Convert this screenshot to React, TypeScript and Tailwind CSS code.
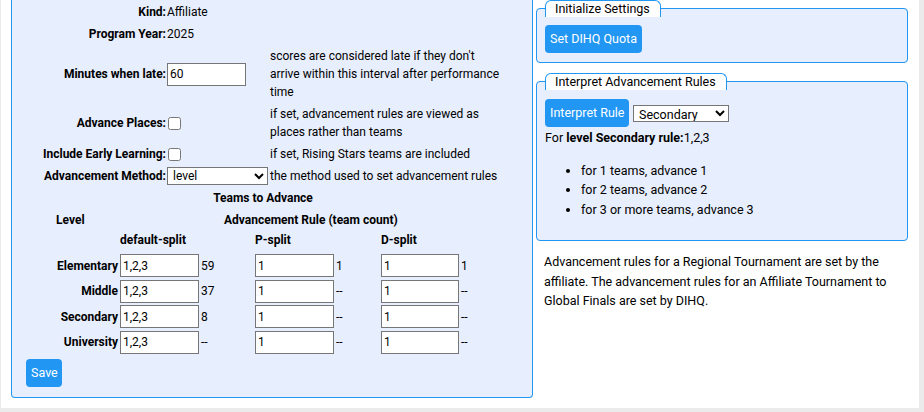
import React from "react";

const inputCls =
  "h-[23px] border border-[#767676] bg-white px-[2px] text-[12px] leading-[18px] text-black outline-none";
const btnCls =
  "h-[28px] whitespace-nowrap rounded-[4px] bg-[#2196f3] px-[5px] leading-[16px] text-white";

function Row({
  label,
  children,
  desc,
}: {
  label: string;
  children?: React.ReactNode;
  desc?: React.ReactNode;
}) {
  return (
    <div className="flex items-center py-[2px]">
      <div className="w-[155px] pr-[1px] text-right font-bold leading-[18px]">{label}</div>
      <div className="flex w-[103px] items-center leading-[18px]">{children}</div>
      <div className="w-[236px] leading-[18px]">{desc}</div>
    </div>
  );
}

function LevelRow({ name, a, c1, c2, c3 }: { name: string; a: string; c1: string; c2: string; c3: string }) {
  return (
    <div className="flex h-[25.5px] items-center">
      <div className="w-[106px] text-right font-bold">{name}</div>
      <input className={`${inputCls} ml-[2px] w-[79px]`} defaultValue={a} />
      <span className="ml-[2px] w-[54px]">{c1}</span>
      <input className={`${inputCls} w-[79px]`} defaultValue="1" />
      <span className="ml-[2px] w-[45px]">{c2}</span>
      <input className={`${inputCls} w-[78px]`} defaultValue="1" />
      <span className="ml-[2px]">{c3}</span>
    </div>
  );
}

export default function App() {
  return (
    <div className="h-[412px] w-[924px] overflow-hidden bg-[#ebebeb] font-['Roboto',sans-serif] text-black">
      <div className="ml-[1px] flex h-[408px] w-[918px] items-start bg-white pl-[10px]">
        {/* Left panel */}
        <div className="w-[522px] rounded-b-[4px] border border-t-0 border-[#2196f3] bg-[#e7eefd] pt-[1px] pb-[10px] text-[12px]">
          <Row label="Kind:">Affiliate</Row>
          <Row label="Program Year:">2025</Row>
          <Row
            label="Minutes when late:"
            desc="scores are considered late if they don't arrive within this interval after performance time"
          >
            <input className={`${inputCls} h-[22px] w-[79px]`} defaultValue="60" />
          </Row>
          <Row label="Advance Places:" desc="if set, advancement rules are viewed as places rather than teams">
            <input type="checkbox" className="m-0 ml-[1px]" />
          </Row>
          <Row label="Include Early Learning:" desc="if set, Rising Stars teams are included">
            <input type="checkbox" className="m-0 ml-[1px]" />
          </Row>
          <Row label="Advancement Method:" desc="the method used to set advancement rules">
            <select
              className="h-[18px] w-[101px] border border-[#767676] bg-white pl-[1px] text-[12px] leading-[16px]"
              defaultValue="level"
            >
              <option value="level">level</option>
            </select>
          </Row>
          <div className="flex py-[2px]">
            <div className="ml-[151px] w-[200px] text-center font-bold leading-[18px]">Teams to Advance</div>
          </div>
          <div className="flex h-[21px] items-center font-bold">
            <div className="w-[212px] pl-[44px]">Level</div>
            <div>Advancement Rule (team count)</div>
          </div>
          <div className="flex h-[23px] items-start pt-[1px] font-bold leading-[18px]">
            <div className="w-[108px]" />
            <div className="w-[135px]">default-split</div>
            <div className="w-[126px]">P-split</div>
            <div>D-split</div>
          </div>
          <LevelRow name="Elementary" a="1,2,3" c1="59" c2="1" c3="1" />
          <LevelRow name="Middle" a="1,2,3" c1="37" c2="--" c3="--" />
          <LevelRow name="Secondary" a="1,2,3" c1="8" c2="--" c3="--" />
          <LevelRow name="University" a="1,2,3" c1="--" c2="--" c3="--" />
          <div className="mt-[4px] pl-[14px]">
            <button className={`${btnCls} w-[36px] px-0 text-[12.5px]`}>Save</button>
          </div>
        </div>

        {/* Right column */}
        <div className="ml-[3px] w-[372px] text-[12.5px]">
          <fieldset className="rounded-[4px] border border-[#2196f3] bg-[#e7eefd] px-[8px] pt-[8px] pb-[9px]">
            <legend className="rounded-t-[6px] border border-b-0 border-[#2196f3] bg-white pr-[10px] pl-[9px] leading-[16px]">
              Initialize Settings
            </legend>
            <button className={`${btnCls} w-[97px]`}>Set DIHQ Quota</button>
          </fieldset>

          <fieldset className="mt-[10px] rounded-[4px] border border-[#2196f3] bg-[#e7eefd] px-[8px] pt-[9px] pb-[8px]">
            <legend className="rounded-t-[6px] border border-b-0 border-[#2196f3] bg-white pr-[10px] pl-[9px] leading-[16px]">
              Interpret Advancement Rules
            </legend>
            <div className="flex items-center gap-[4px]">
              <button className={`${btnCls} w-[84px]`}>Interpret Rule</button>
              <select
                className="h-[17px] w-[96px] border border-[#767676] bg-white pl-[1px] text-[12.5px] leading-[15px]"
                defaultValue="Secondary"
              >
                <option>Elementary</option>
                <option>Middle</option>
                <option>Secondary</option>
                <option>University</option>
              </select>
            </div>
            <div className="mt-[1px] leading-[19.5px]">
              For <b>level Secondary rule:</b>1,2,3
            </div>
            <ul className="my-[13px] list-disc pl-[36px] leading-[19.5px]">
              <li>for 1 teams, advance 1</li>
              <li>for 2 teams, advance 2</li>
              <li>for 3 or more teams, advance 3</li>
            </ul>
          </fieldset>

          <p className="mt-[11px] px-[8px] leading-[19.5px]">
            Advancement rules for a Regional Tournament are set by the affiliate. The advancement rules for an
            Affiliate Tournament to Global Finals are set by DIHQ.
          </p>
        </div>
      </div>
    </div>
  );
}
